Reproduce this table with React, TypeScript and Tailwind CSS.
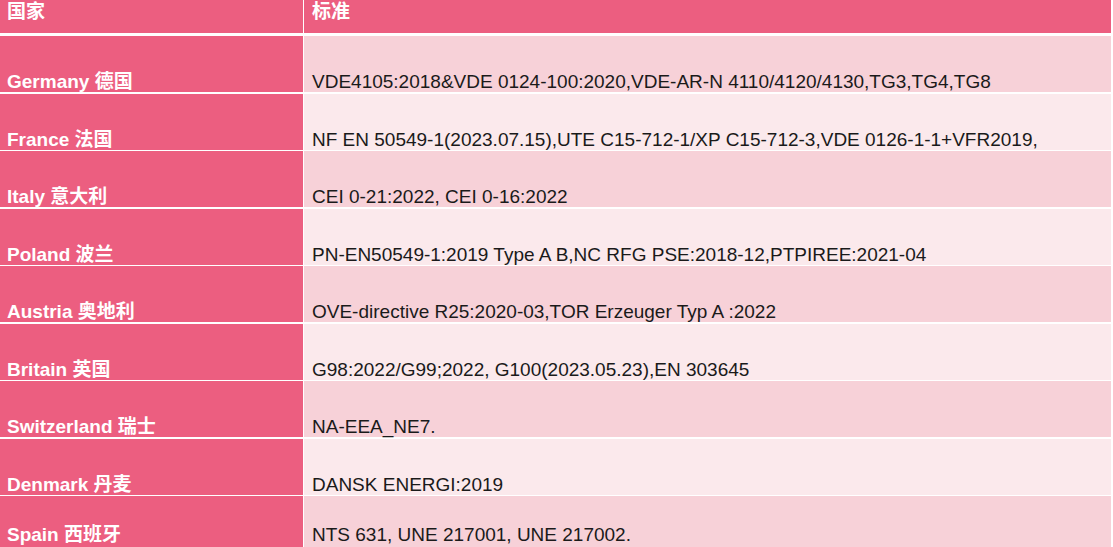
const rows: [string, string][] = [
  ["Germany 德国", "VDE4105:2018&VDE 0124-100:2020,VDE-AR-N 4110/4120/4130,TG3,TG4,TG8"],
  ["France 法国", "NF EN 50549-1(2023.07.15),UTE C15-712-1/XP C15-712-3,VDE 0126-1-1+VFR2019,"],
  ["Italy 意大利", "CEI 0-21:2022, CEI 0-16:2022"],
  ["Poland 波兰", "PN-EN50549-1:2019 Type A B,NC RFG PSE:2018-12,PTPIREE:2021-04"],
  ["Austria 奥地利", "OVE-directive R25:2020-03,TOR Erzeuger Typ A :2022"],
  ["Britain 英国", "G98:2022/G99;2022, G100(2023.05.23),EN 303645"],
  ["Switzerland 瑞士", "NA-EEA_NE7."],
  ["Denmark 丹麦", "DANSK ENERGI:2019"],
  ["Spain 西班牙", "NTS 631, UNE 217001, UNE 217002."],
];

const font = { fontFamily: '"Liberation Sans", "Noto Sans CJK SC", Arial, sans-serif' };

export default function App() {
  return (
    <div className="h-[547px] w-[1113px] overflow-hidden bg-white" style={font}>
      <div className="w-[1111px]">
        {/* header */}
        <div className="flex h-[33px] gap-px">
          <div className="w-[303px] bg-[#ec5e80] px-[7px] text-[19px] font-bold leading-[23px] text-white">国家</div>
          <div className="flex-1 bg-[#ec5e80] px-[8px] text-[19px] font-bold leading-[23px] text-white">标准</div>
        </div>

        <div className="mt-[3px] flex flex-col gap-[1.5px]">
          {rows.map(([country, std], i) => {
            const last = i === rows.length - 1;
            return (
              <div key={country} className="flex h-[56px] gap-px">
                <div
                  className={`flex w-[303px] items-end bg-[#ec5e80] px-[7px] text-[19px] font-bold leading-[20px] text-white ${
                    last ? "pb-[7px]" : "pb-0"
                  }`}
                >
                  {country}
                </div>
                <div
                  className={`flex flex-1 items-end px-[8px] text-[19px] leading-[20px] text-[#1a1a1a] ${
                    i % 2 === 0 ? "bg-[#f7d1d8]" : "bg-[#fbe9ec]"
                  } ${last ? "pb-[7px]" : "pb-0"}`}
                >
                  {std}
                </div>
              </div>
            );
          })}
        </div>
      </div>
    </div>
  );
}
